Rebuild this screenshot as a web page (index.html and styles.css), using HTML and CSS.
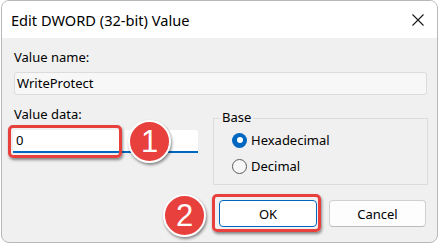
FILE: index.html
```html
<!DOCTYPE html>
<html>
<head>
<meta charset="utf-8">
<link rel="stylesheet" href="styles.css">
</head>
<body>
<div class="page">
  <div class="window">
    <div class="titlebar">
      <span class="title">Edit DWORD (32-bit) Value</span>
      <svg class="close" width="12" height="12" viewBox="0 0 12 12"><path d="M0.5 0.5L11.5 11.5M11.5 0.5L0.5 11.5" stroke="#1a1a1a" stroke-width="1.1" fill="none"/></svg>
    </div>
    <div class="content">
      <div class="label">Value name:</div>
      <div class="field readonly">WriteProtect</div>
      <div class="row">
        <div class="col">
          <div class="label">Value data:</div>
          <div class="field edit">0</div>
        </div>
        <div class="group">
          <span class="legend">Base</span>
          <div class="radio"><span class="dot on"></span>Hexadecimal</div>
          <div class="radio"><span class="dot"></span>Decimal</div>
        </div>
      </div>
      <div class="buttons">
        <div class="btn default">OK</div>
        <div class="btn">Cancel</div>
      </div>
    </div>
  </div>
  <div class="mark mark-1"></div>
  <div class="badge badge-1">1</div>
  <div class="mark mark-2"></div>
  <div class="badge badge-2">2</div>
</div>
</body>
</html>
```

FILE: styles.css
```css
html, body {
  margin: 0;
  padding: 0;
  background: #ffffff;
}
.page {
  position: relative;
  width: 440px;
  height: 245px;
  overflow: hidden;
  font-family: "Noto Sans", "DejaVu Sans", sans-serif;
  font-size: 13px;
  color: #000;
}
.window {
  margin-left: 1px;
  width: 435px;
  height: 241px;
  border: 1px solid #b8b8b8;
  border-radius: 8px;
  overflow: hidden;
  background: #f0f0f0;
  display: flex;
  flex-direction: column;
}
.titlebar {
  height: 37px;
  flex: none;
  background: #ffffff;
  display: flex;
  align-items: center;
  justify-content: space-between;
  padding: 0 13px 0 9px;
}
.title {
  font-size: 14.6px;
  line-height: 20px;
  margin-top: 1px;
}
.close {
  display: block;
  margin-top: 1px;
}
.content {
  padding: 11px 10px 0 12px;
  display: flex;
  flex-direction: column;
}
.label {
  line-height: 16px;
}
.field {
  box-sizing: border-box;
  height: 23px;
  line-height: 20px;
  padding-left: 2px;
  border-radius: 3px;
}
.readonly {
  margin-top: 7px;
  background: #f7f7f7;
  border: 1px solid #dcdcdc;
}
.row {
  margin-top: 11px;
  display: flex;
  gap: 15px;
}
.col {
  width: 184px;
  display: flex;
  flex-direction: column;
}
.edit {
  margin-top: 8px;
  margin-left: -1px;
  background: #ffffff;
  border-bottom: 2px solid #0067c0;
  border-radius: 3px 3px 0 0;
  padding-left: 3px;
  line-height: 21px;
}
.group {
  position: relative;
  flex: 1;
  margin-top: 12px;
  margin-right: -1px;
  height: 67px;
  box-sizing: border-box;
  border: 1px solid #dcdcdc;
  padding: 8px 0 0 18px;
}
.legend {
  position: absolute;
  top: -10px;
  left: 6px;
  padding: 0 2px;
  line-height: 16px;
  background: #f0f0f0;
}
.radio {
  height: 26px;
  display: flex;
  align-items: center;
  gap: 4px;
}
.dot {
  box-sizing: border-box;
  width: 15px;
  height: 15px;
  border-radius: 50%;
  border: 1px solid #5c5c5c;
  background: #f7f7f7;
  display: flex;
  align-items: center;
  justify-content: center;
}
.dot.on {
  border: none;
  background: #0067c0;
}
.dot.on::after {
  content: "";
  width: 6px;
  height: 6px;
  border-radius: 50%;
  background: #ffffff;
}
.buttons {
  margin-top: 15px;
  display: flex;
  justify-content: flex-end;
  gap: 12px;
  padding-right: 1px;
}
.btn {
  box-sizing: border-box;
  width: 97px;
  height: 27px;
  border: 1px solid #d0d0d0;
  border-bottom-color: #bcbcbc;
  border-radius: 4px;
  background: #fdfdfd;
  display: flex;
  align-items: center;
  justify-content: center;
}
.btn.default {
  width: 98px;
  border: 1px solid #0067c0;
  background: #ffffff;
}
.mark {
  position: absolute;
  box-sizing: border-box;
  border: 3px solid #e8403c;
  border-radius: 5px;
  box-shadow: 1px 2px 3px rgba(0, 0, 0, 0.45);
}
.mark-1 {
  left: 8px;
  top: 125px;
  width: 114px;
  height: 33px;
}
.mark-2 {
  left: 212px;
  top: 194px;
  width: 109px;
  height: 38px;
}
.badge {
  position: absolute;
  box-sizing: border-box;
  width: 43px;
  height: 43px;
  border-radius: 50%;
  background: #e8403c;
  border: 2px solid #ffffff;
  box-shadow: 1px 2px 3px rgba(0, 0, 0, 0.45);
  color: #ffffff;
  font-family: "Liberation Sans", Arial, sans-serif;
  font-size: 31px;
  display: flex;
  align-items: center;
  justify-content: center;
}
.badge-1 {
  left: 128px;
  top: 120px;
}
.badge-2 {
  left: 163px;
  top: 194px;
}
```
